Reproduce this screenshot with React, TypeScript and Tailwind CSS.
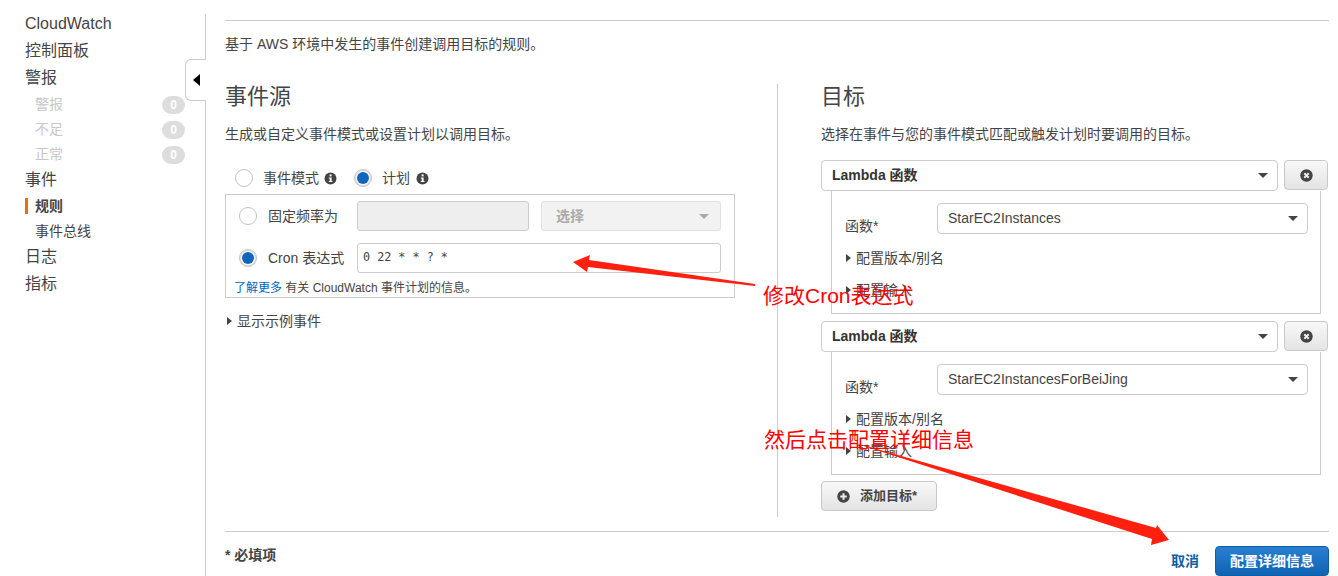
import React from 'react';

const font = '"Liberation Sans", "Noto Sans CJK SC", sans-serif';

function Radio({ checked }: { checked?: boolean }) {
  return (
    <span className={`flex h-[18px] w-[18px] shrink-0 items-center justify-center rounded-full border border-[#c4c4c4] bg-white ${checked ? 'shadow-[inset_0_0_2px_#999]' : ''}`}>
      {checked && <span className="h-[12px] w-[12px] rounded-full bg-[#1166bb]" />}
    </span>
  );
}

function Caret({ className = 'border-t-[#444]' }: { className?: string }) {
  return <span className={`h-0 w-0 border-x-[5px] border-t-[5px] border-x-transparent ${className}`} />;
}

function Expander({ label }: { label: string }) {
  return (
    <div className="flex items-center gap-[5px] text-[14px] leading-[20px] text-[#444]">
      <span className="h-0 w-0 border-y-[4px] border-l-[5px] border-y-transparent border-l-[#444]" />
      {label}
    </div>
  );
}

function Info() {
  return (
    <svg width="13" height="13" viewBox="0 0 13 13">
      <circle cx="6.5" cy="6.5" r="6" fill="#444" />
      <rect x="5.6" y="2.4" width="2" height="2" fill="#fff" />
      <path d="M4.8 5.5h2.8v3.6h.9v1H4.8v-1h.9V6.5h-.9z" fill="#fff" />
    </svg>
  );
}

function CircleIcon({ kind }: { kind: 'x' | 'plus' }) {
  return (
    <svg width="13" height="13" viewBox="0 0 13 13">
      <circle cx="6.5" cy="6.5" r="6.2" fill="#444" />
      {kind === 'x' ? (
        <path d="M4.3 4.3l4.4 4.4M8.7 4.3l-4.4 4.4" stroke="#eee" strokeWidth="2" />
      ) : (
        <path d="M6.5 3.2v6.6M3.2 6.5h6.6" stroke="#eee" strokeWidth="2" />
      )}
    </svg>
  );
}

function NavSub({ label, count }: { label: string; count: number }) {
  return (
    <div className="flex h-[25px] items-center justify-between pl-[10px] pr-[20px] text-[14px] text-[#c8c8c8]">
      {label}
      <span className="flex h-[18px] w-[23px] items-center justify-center rounded-full bg-[#dddddd] text-[12px] font-bold text-white">{count}</span>
    </div>
  );
}

function TargetCard({ fn }: { fn: string }) {
  return (
    <div>
      <div className="relative z-10 flex gap-[6px]">
        <div className="flex h-[31px] flex-1 items-center justify-between rounded-[4px] border border-[#cccccc] bg-white pl-[10px] pr-[9px] text-[14px] font-bold text-[#333]">
          Lambda 函数
          <Caret />
        </div>
        <button className="flex h-[30px] w-[44px] items-center justify-center rounded-[4px] border border-[#c8c8c8] bg-gradient-to-b from-[#f8f8f8] to-[#e4e4e4]">
          <CircleIcon kind="x" />
        </button>
      </div>
      <div className="ml-[10px] mr-[7px] h-[123px] border border-t-0 border-[#cccccc] pl-[13px] pr-[12px] pt-[12px]">
        <div className="flex">
          <span className="mt-[13px] w-[92px] text-[14px] leading-[20px] text-[#444]">函数*</span>
          <div className="flex h-[31px] flex-1 items-center justify-between rounded-[4px] border border-[#cccccc] bg-white pl-[10px] pr-[9px] text-[14px] text-[#444]">
            {fn}
            <Caret />
          </div>
        </div>
        <div className="ml-[1px] mt-[12px]"><Expander label="配置版本/别名" /></div>
        <div className="ml-[1px] mt-[12px]"><Expander label="配置输入" /></div>
      </div>
    </div>
  );
}

export default function App() {
  return (
    <div className="relative flex h-[576px] w-[1338px] overflow-hidden bg-white" style={{ fontFamily: font }}>
      <aside className="mt-[14px] h-[562px] w-[206px] shrink-0 border-r border-[#cccccc] pl-[25px] pt-[1px] text-[#444]">
        <div className="flex h-[18px] items-center text-[16px]">CloudWatch</div>
        <div className="mt-[9px] flex h-[18px] items-center text-[16px]">控制面板</div>
        <div className="mt-[9px] flex h-[18px] items-center text-[16px]">警报</div>
        <div className="mt-[5px]">
          <NavSub label="警报" count={0} />
          <NavSub label="不足" count={0} />
          <NavSub label="正常" count={0} />
        </div>
        <div className="mt-[4px] flex h-[18px] items-center text-[16px]">事件</div>
        <div className="mt-[9px] flex h-[16px] items-center border-l-[3px] border-[#dd7700] pl-[7px] text-[14px] font-bold text-[#444]">规则</div>
        <div className="mt-[9px] flex h-[16px] items-center pl-[10px] text-[14px]">事件总线</div>
        <div className="mt-[9px] flex h-[18px] items-center text-[16px]">日志</div>
        <div className="mt-[9px] flex h-[18px] items-center text-[16px]">指标</div>
      </aside>

      {/* collapse tab */}
      <div className="absolute left-[185px] top-[59px] flex h-[42px] w-[21px] items-center justify-start rounded-l-[6px] border border-r-0 border-[#cccccc] bg-white pl-[7px]">
        <span className="h-0 w-0 border-y-[6px] border-r-[7px] border-y-transparent border-r-black" />
      </div>

      <main className="ml-[19px] mt-[20px] flex w-[1104px] flex-col text-[#444]">
        <div className="border-t border-[#cccccc] pt-[14px] text-[14px] leading-[18px]">基于 AWS 环境中发生的事件创建调用目标的规则。</div>

        <div className="mt-[31px] flex h-[433px]">
          <section className="w-[510px]">
            <h2 className="text-[22px] leading-[26px]">事件源</h2>
            <p className="mt-[15px] text-[14px] leading-[18px]">生成或自定义事件模式或设置计划以调用目标。</p>
            <div className="mt-[25px] flex h-[20px] items-center pl-[10px] text-[14px]">
              <Radio />
              <span className="ml-[10px]">事件模式</span>
              <span className="ml-[5px]"><Info /></span>
              <span className="ml-[17px]"><Radio checked /></span>
              <span className="ml-[10px]">计划</span>
              <span className="ml-[6px]"><Info /></span>
            </div>
            <div className="mt-[6px] h-[104px] border border-[#cccccc] pl-[13px] pr-[13px] pt-[6px]">
              <div className="flex items-center">
                <Radio />
                <span className="ml-[11px] w-[89px] text-[14px]">固定频率为</span>
                <div className="h-[30px] w-[172px] rounded-[3px] border border-[#cccccc] bg-[#eeeeee]" />
                <div className="ml-[12px] flex h-[30px] flex-1 items-center justify-between rounded-[3px] border border-[#e0e0e0] bg-[#f2f2f2] pl-[14px] pr-[11px] text-[14px] font-bold text-[#aaaaaa]">
                  选择
                  <Caret className="border-t-[#aaaaaa]" />
                </div>
              </div>
              <div className="mt-[12px] flex items-center">
                <Radio checked />
                <span className="ml-[11px] w-[89px] whitespace-nowrap text-[14px]">Cron 表达式</span>
                <div className="flex h-[30px] flex-1 items-center rounded-[3px] border border-[#cccccc] bg-white pl-[5px] text-[11.75px] text-[#444]" style={{ fontFamily: '"DejaVu Sans Mono", monospace' }}>
                  0 22 * * ? *
                </div>
              </div>
              <div className="-ml-[5px] mt-[6px] text-[12px] leading-[18px]"><a className="text-[#0066bb]">了解更多</a> 有关 CloudWatch 事件计划的信息。</div>
            </div>
            <div className="mt-[13px] pl-[2px]"><Expander label="显示示例事件" /></div>
          </section>

          <div className="ml-[42px] w-px bg-[#cccccc]" />

          <section className="ml-[43px] w-[507px]">
            <h2 className="text-[22px] leading-[26px]">目标</h2>
            <p className="mt-[15px] text-[14px] leading-[18px]">选择在事件与您的事件模式匹配或触发计划时要调用的目标。</p>
            <div className="mt-[17px]"><TargetCard fn="StarEC2Instances" /></div>
            <div className="mt-[7px]"><TargetCard fn="StarEC2InstancesForBeiJing" /></div>
            <button className="mt-[6px] flex h-[30px] w-[116px] items-center rounded-[4px] border border-[#c8c8c8] bg-gradient-to-b from-[#f8f8f8] to-[#e4e4e4] pl-[15px] text-[13px] font-bold text-[#444]">
              <CircleIcon kind="plus" />
              <span className="ml-[10px]">添加目标*</span>
            </button>
          </section>
        </div>

        <div className="mt-[14px] flex flex-1 items-start justify-between border-t border-[#cccccc]">
          <span className="mt-[13px] text-[14px] font-bold">* 必填项</span>
          <div className="mt-[14px] flex items-center">
            <span className="mr-[16px] text-[14px] font-bold text-[#0f5fa8]">取消</span>
            <button className="h-[30px] w-[114px] rounded-[4px] border border-[#0f5fa8] bg-gradient-to-b from-[#2b7fd0] to-[#0f64b4] text-[14px] font-bold text-white">配置详细信息</button>
          </div>
        </div>
      </main>

      {/* red annotations drawn over the page */}
      <svg className="pointer-events-none absolute left-0 top-0" width="1338" height="576">
        <polygon points="573,262 590,255 589,260 755,284 755,286 588,267 587,272" fill="#ff2010" />
        <polygon points="845,440 1156,528 1157,525 1169,540 1151,545 1152,539" fill="#ff2010" />
      </svg>
      <span className="absolute left-[763px] top-[281px] text-[21px] leading-[30px] text-[#ff0000]">修改Cron表达式</span>
      <span className="absolute left-[764px] top-[425px] text-[21px] leading-[30px] text-[#ff0000]">然后点击配置详细信息</span>
    </div>
  );
}
